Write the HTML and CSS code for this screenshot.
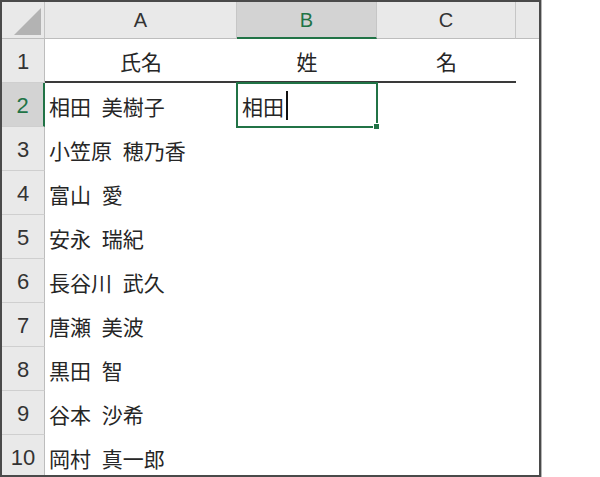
FILE: index.html
```html
<!DOCTYPE html>
<html lang="ja">
<head>
<meta charset="utf-8">
<title>Sheet</title>
<link rel="stylesheet" href="styles.css">
</head>
<body>
<div class="sheet">
  <div class="grid">
    <div class="hd corner"><svg class="tri" width="30" height="30" viewBox="0 0 30 30"><polygon points="29,1 29,28 2,28" fill="#b3b3b3"/></svg></div>
    <div class="hd col">A</div>
    <div class="hd col sel-col">B</div>
    <div class="hd col">C</div>
    <div class="hd col extra"></div>

    <div class="hd row">1</div>
    <div class="cell center r1">氏名</div>
    <div class="cell center r1">姓</div>
    <div class="cell center r1">名</div>
    <div class="cell"></div>

    <div class="hd row sel-row">2</div>
    <div class="cell">相田 美樹子</div>
    <div class="cell active"><span class="edit">相田</span><span class="caret"></span><span class="handle"></span></div>
    <div class="cell"></div>
    <div class="cell"></div>

    <div class="hd row">3</div>
    <div class="cell">小笠原 穂乃香</div>
    <div class="cell"></div><div class="cell"></div><div class="cell"></div>

    <div class="hd row">4</div>
    <div class="cell">富山 愛</div>
    <div class="cell"></div><div class="cell"></div><div class="cell"></div>

    <div class="hd row">5</div>
    <div class="cell">安永 瑞紀</div>
    <div class="cell"></div><div class="cell"></div><div class="cell"></div>

    <div class="hd row">6</div>
    <div class="cell">長谷川 武久</div>
    <div class="cell"></div><div class="cell"></div><div class="cell"></div>

    <div class="hd row">7</div>
    <div class="cell">唐瀬 美波</div>
    <div class="cell"></div><div class="cell"></div><div class="cell"></div>

    <div class="hd row">8</div>
    <div class="cell">黒田 智</div>
    <div class="cell"></div><div class="cell"></div><div class="cell"></div>

    <div class="hd row">9</div>
    <div class="cell">谷本 沙希</div>
    <div class="cell"></div><div class="cell"></div><div class="cell"></div>

    <div class="hd row">10</div>
    <div class="cell">岡村 真一郎</div>
    <div class="cell"></div><div class="cell"></div><div class="cell"></div>
  </div>
</div>
</body>
</html>
```
FILE: styles.css
```css
html, body {
  margin: 0;
  padding: 0;
  background: #ffffff;
}
.sheet {
  width: 541px;
  height: 477px;
  box-sizing: border-box;
  border: 2px solid #4a4a4a;
  overflow: hidden;
  background: #fff;
  box-shadow: 1px 0 0 #b5b5b5;
}
.grid {
  display: grid;
  grid-template-columns: 43px 192px 140px 139px 1fr;
  grid-template-rows: 37px repeat(10, 44px);
}
.hd {
  background: #e9e9e9;
  color: #333;
  font-family: "Liberation Sans", Arial, sans-serif;
  display: flex;
  align-items: center;
  justify-content: center;
  box-sizing: border-box;
}
.corner {
  border-right: 1px solid #c4c4c4;
  border-bottom: 1px solid #bdbdbd;
  position: relative;
}
.tri {
  position: absolute;
  left: 10px;
  top: 5px;
}
.col {
  font-size: 20px;
  border-right: 1px solid #c6c6c6;
  border-bottom: 1px solid #bdbdbd;
  padding-top: 1px;
}
.col.extra {
  border-right: none;
}
.sel-col {
  background: #d3d3d3;
  color: #217346;
  border-bottom: 2px solid #217346;
}
.row {
  font-size: 22px;
  border-right: 1px solid #bdbdbd;
  border-bottom: 1px solid #cfcfcf;
  padding-top: 2px;
}
.sel-row {
  background: #d3d3d3;
  color: #217346;
  border-right: 2px solid #217346;
}
.cell {
  font-family: "Noto Sans CJK JP", "Noto Sans", sans-serif;
  font-size: 21px;
  color: #262626;
  display: flex;
  align-items: center;
  padding-left: 4px;
  padding-top: 1px;
  box-sizing: border-box;
  white-space: pre;
  word-spacing: 6px;
}
.center {
  justify-content: center;
  padding-left: 0;
}
.r1 {
  border-bottom: 2px solid #3a3a3a;
}
.active {
  position: relative;
  padding-left: 5px;
}
.active::before {
  content: "";
  position: absolute;
  left: -1px;
  top: -1px;
  right: -1px;
  bottom: -1px;
  border: 2px solid #217346;
}
.caret {
  display: inline-block;
  width: 1.5px;
  height: 29px;
  background: #111;
  margin-left: 2px;
}
.handle {
  position: absolute;
  right: -3px;
  bottom: -3px;
  width: 5px;
  height: 5px;
  background: #217346;
  border: 1px solid #fff;
}
```
